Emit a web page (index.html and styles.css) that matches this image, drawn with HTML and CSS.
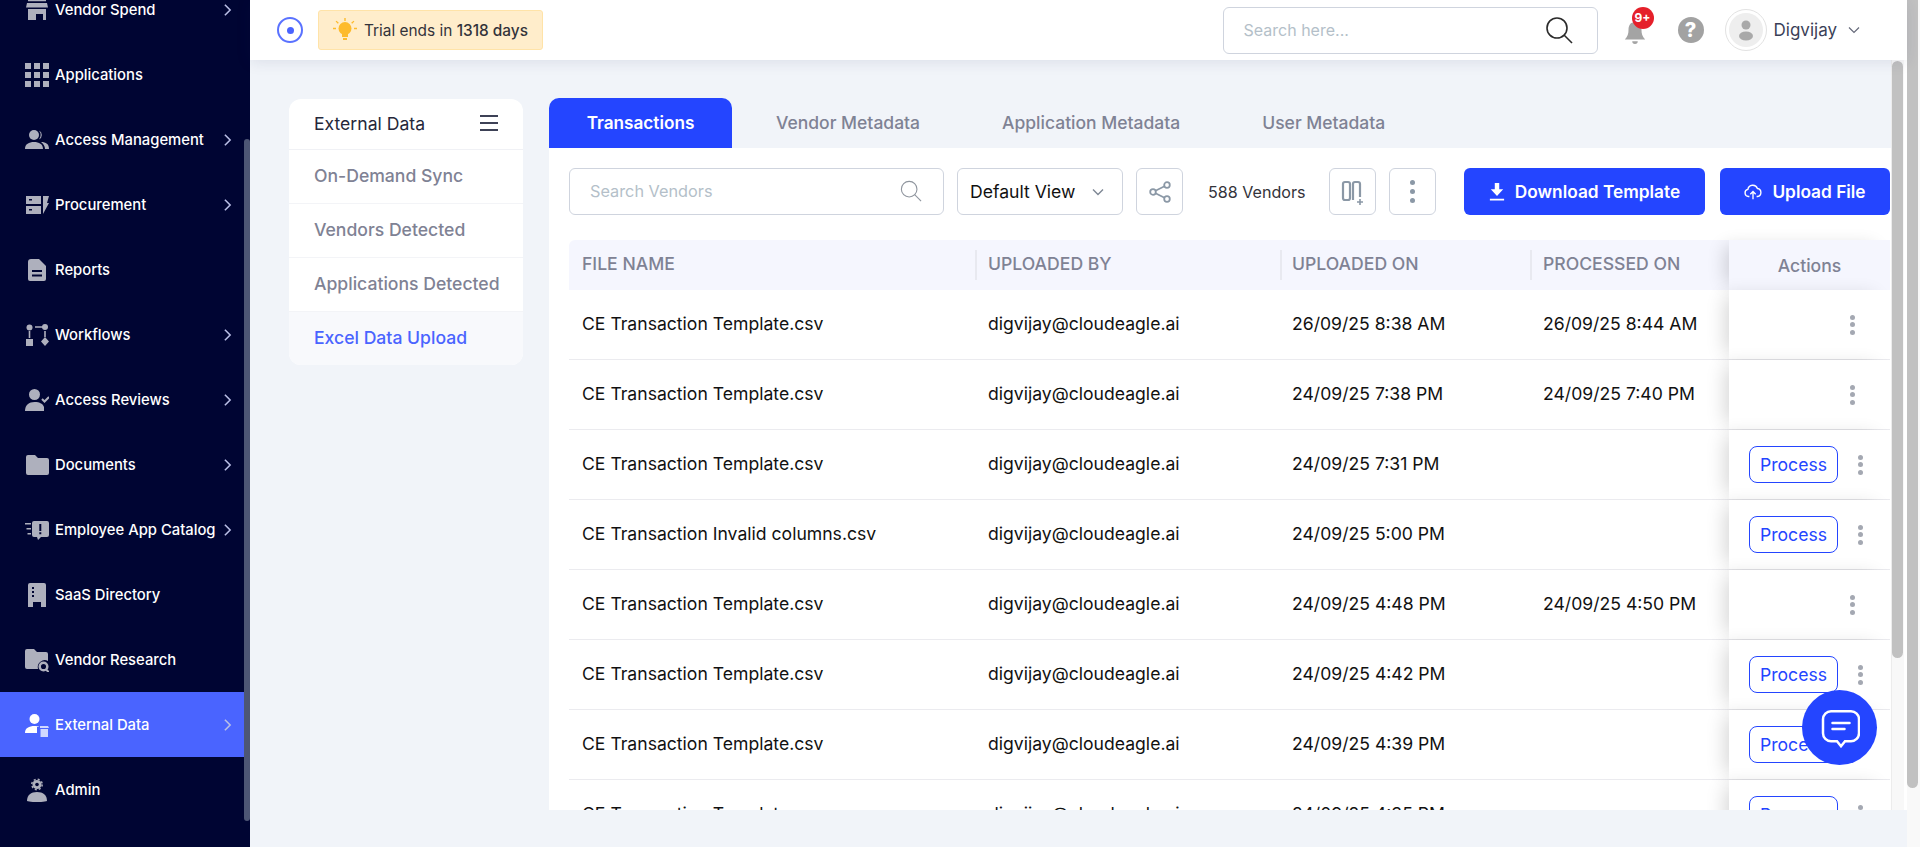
FILE: index.html
```html
<!DOCTYPE html>
<html lang="en">
<head>
    <meta charset="utf-8" />
    <title>External Data</title>
    <link rel="stylesheet" href="styles.css">
</head>
<body>
    <aside class="sidebar">
        <nav class="side-nav">
            <a class="side-item">
                <svg class="side-icon" viewBox="0 0 24 24"><path d="M3 1h18v2.2H3zM2 5h20l1 4.5H1zM3 11h18v11h-3v-6H11v6H3zM5.5 15h3.5v3.500H5.500z" /></svg>
                <span class="side-label">Vendor Spend</span><span class="side-arrow"><svg viewBox="0 0 10 16"><path d="M2 2l6 6-6 6" /></svg></span>
            </a>
            <a class="side-item">
                <svg class="side-icon" viewBox="0 0 24 24"><path d="M0 0h6v6H0zM9 0h6v6H9zM18 0h6v6h-6zM0 9h6v6H0zM9 9h6v6H9zM18 9h6v6h-6zM0 18h6v6H0zM9 18h6v6H9zM18 18h6v6h-6z" /></svg>
                <span class="side-label">Applications</span>
            </a>
            <a class="side-item">
                <svg class="side-icon" viewBox="0 0 24 24"><circle cx="9" cy="7" r="5" /><path d="M0 21c0-5 4-7 9-7s9 2 9 7zM14 2.500a5 5 0 0 1 0 9 7 7 0 0 0 0-9zM16 14c5 0 8 2 8 7h-4c0-3-1.500-5-4-7z" /></svg>
                <span class="side-label">Access Management</span><span class="side-arrow"><svg viewBox="0 0 10 16"><path d="M2 2l6 6-6 6" /></svg></span>
            </a>
            <a class="side-item">
                <svg class="side-icon" viewBox="0 0 24 24"><path d="M1 3h15v8H1zM1 13h15v8H1zM18 3h6l-2 7h2l-6 11z" /><path class="cut" d="M4 6h3v1.500H4zM4 16h3v1.500H4z" /></svg>
                <span class="side-label">Procurement</span><span class="side-arrow"><svg viewBox="0 0 10 16"><path d="M2 2l6 6-6 6" /></svg></span>
            </a>
            <a class="side-item">
                <svg class="side-icon" viewBox="0 0 24 24"><path d="M6 1h8l7 7v13a2 2 0 0 1-2 2H5a2 2 0 0 1-2-2V4a3 3 0 0 1 3-3z" /><path class="cut" d="M7 12h10v2H7zM7 16.500h10v2H7z" /></svg>
                <span class="side-label">Reports</span>
            </a>
            <a class="side-item">
                <svg class="side-icon" viewBox="0 0 24 24"><circle cx="4.500" cy="4.500" r="3" /><circle cx="20" cy="4" r="3" /><path d="M3.700 8h1.600v7H3.700zM10 3.200h8v1.600h-8zM1 16h7v7H1zM19.200 8h1.600v6h-1.600zM20 14l4 4.500-4 4.500-4-4.500z" /></svg>
                <span class="side-label">Workflows</span><span class="side-arrow"><svg viewBox="0 0 10 16"><path d="M2 2l6 6-6 6" /></svg></span>
            </a>
            <a class="side-item">
                <svg class="side-icon" viewBox="0 0 24 24"><circle cx="9.500" cy="6.500" r="5.500" /><path d="M0 23c0-6 4-9 9.500-9s8.500 2 9.500 5v4z" /><path class="tick" d="M17 11l2.500 2.500L24 9" /></svg>
                <span class="side-label">Access Reviews</span><span class="side-arrow"><svg viewBox="0 0 10 16"><path d="M2 2l6 6-6 6" /></svg></span>
            </a>
            <a class="side-item">
                <svg class="side-icon" viewBox="0 0 24 24"><path d="M3 2h7l3 3h9a2 2 0 0 1 2 2v13a2 2 0 0 1-2 2H3a2 2 0 0 1-2-2V4a2 2 0 0 1 2-2z" /></svg>
                <span class="side-label">Documents</span><span class="side-arrow"><svg viewBox="0 0 10 16"><path d="M2 2l6 6-6 6" /></svg></span>
            </a>
            <a class="side-item">
                <svg class="side-icon" viewBox="0 0 24 24"><path d="M0 5h6v1.500H0zM1.500 10h4.500v1.500H1.500zM2.500 15h3.500v1.500H2.500zM9 3h13a2 2 0 0 1 2 2v12a2 2 0 0 1-2 2h-6l-3 3-1-3H9a2 2 0 0 1-2-2V5a2 2 0 0 1 2-2z" /><path class="cut" d="M14.300 6h2v7h-2zM14.300 14.200h2v2h-2z" /></svg>
                <span class="side-label">Employee App Catalog</span><span class="side-arrow"><svg viewBox="0 0 10 16"><path d="M2 2l6 6-6 6" /></svg></span>
            </a>
            <a class="side-item">
                <svg class="side-icon" viewBox="0 0 24 24"><path d="M5 0h14a2 2 0 0 1 2 2v22h-5v-5H8v5H3V2a2 2 0 0 1 2-2z" /><path class="cut" d="M7 4h2v2H7zM7 8h2v2H7zM7 12h2v2H7zM10 21h4v3h-4z" /></svg>
                <span class="side-label">SaaS Directory</span>
            </a>
            <a class="side-item">
                <svg class="side-icon" viewBox="0 0 24 24"><path d="M2 1h7l3 3h9a2 2 0 0 1 2 2v7a7 7 0 0 0-10 8H2a2 2 0 0 1-2-2V3a2 2 0 0 1 2-2z" /><circle class="ring" cx="18.500" cy="18.500" r="3.800" /><path class="tick" d="M21 21.500l3 3" /></svg>
                <span class="side-label">Vendor Research</span>
            </a>
            <a class="side-item active">
                <svg class="side-icon" viewBox="0 0 24 24"><circle cx="9.500" cy="6" r="5" /><path d="M0 20c0-5 4-7 9.500-7 2 0 3.500.3 5 1H12v6z" /><path d="M15 13h8l1 2h-9zM15.500 16H23v8h-7.500z" opacity=".75" /></svg>
                <span class="side-label">External Data</span><span class="side-arrow"><svg viewBox="0 0 10 16"><path d="M2 2l6 6-6 6" /></svg></span>
            </a>
            <a class="side-item">
                <svg class="side-icon" viewBox="0 0 24 24"><circle cx="12" cy="6.500" r="4.500" /><circle class="teeth" cx="12" cy="6.500" r="5.200" /><path d="M2 23c0-6 4-9 10-9s10 3 10 9c-3 1.500-17 1.500-20 0z" /><circle class="cut" cx="12" cy="6.500" r="1.800" /></svg>
                <span class="side-label">Admin</span>
            </a>
        </nav>
        <div class="side-scroll"><div class="side-thumb"></div></div>
    </aside>

    <div class="page">
        <header class="topbar">
            <span class="target"><span class="target-dot"></span></span>
            <div class="trial">
                <svg class="bulb" viewBox="0 0 26 26"><circle cx="13" cy="11.500" r="6.500" /><path d="M10 17h6v3h-6zM11 21h4v2h-4zM12.300 1h1.400v3h-1.400zM1 10.800h3v1.400H1zM22 10.800h3v1.400h-3zM4.500 3.700l2.300 2-1 1-2.200-2.100zM21.500 3.700l-2.300 2 1 1 2.200-2.100z" /></svg>
                <span>Trial ends in <b>1318 days</b></span>
            </div>
            <div class="top-search">
                <span class="top-search-text">Search here...</span>
                <svg class="top-search-icon" viewBox="0 0 28 28"><circle cx="12" cy="12" r="10" /><path d="M19 19l8 8" /></svg>
            </div>
            <div class="bell">
                <svg viewBox="0 0 24 26"><path d="M12 1c5 0 7 4 7 8 0 5 1 8 4 11H1c3-3 4-6 4-11 0-4 2-8 7-8zM9 22h6a3 3 0 0 1-6 0z" /></svg>
                <span class="badge">9+</span>
            </div>
            <span class="help">?</span>
            <span class="avatar">
                <svg viewBox="0 0 34 34"><circle cx="17" cy="17" r="17" fill="#eeeeee" /><circle cx="17" cy="12" r="4.500" fill="#a9a9a9" /><ellipse cx="17" cy="23" rx="7" ry="4.500" fill="#a9a9a9" /></svg>
            </span>
            <span class="user-name">Digvijay</span>
            <svg class="user-caret" viewBox="0 0 12 8"><path d="M1 1.500l5 5 5-5" /></svg>
        </header>

        <div class="content">
            <div class="sub-nav">
                <div class="sub-head">
                    <span>External Data</span>
                    <span class="burger"><i></i><i></i><i></i></span>
                </div>
                <a class="sub-item">On-Demand Sync</a>
                <a class="sub-item">Vendors Detected</a>
                <a class="sub-item">Applications Detected</a>
                <a class="sub-item current">Excel Data Upload</a>
            </div>

            <section class="panel">
                <div class="tabs">
                    <a class="tab on">Transactions</a>
                    <a class="tab">Vendor Metadata</a>
                    <a class="tab">Application Metadata</a>
                    <a class="tab">User Metadata</a>
                </div>
                <div class="card">
                    <div class="toolbar">
                        <div class="vendor-search">
                            <span>Search Vendors</span>
                            <svg viewBox="0 0 24 24"><circle cx="10" cy="10" r="8.500" /><path d="M16 16l7 7" /></svg>
                        </div>
                        <div class="view-select">
                            <span>Default View</span>
                            <svg viewBox="0 0 12 8"><path d="M1 1.500l5 5 5-5" /></svg>
                        </div>
                        <span class="tool-btn share">
                            <svg viewBox="0 0 24 24"><circle cx="19" cy="5" r="2.800" /><circle cx="5" cy="12" r="2.800" /><circle cx="19" cy="19" r="2.800" /><path d="M16.500 6.300L7.500 10.700M7.500 13.300l9 4.400" /></svg>
                        </span>
                        <span class="count">588 Vendors</span>
                        <span class="tool-btn cols">
                            <svg viewBox="0 0 26 26"><rect x="3" y="3" width="7" height="18" rx="2" /><path d="M13 21V5a2 2 0 0 1 2-2h3a2 2 0 0 1 2 2v13" /><path class="thin" d="M20 20v6M17 23h6" /></svg>
                        </span>
                        <span class="tool-btn dots"><i></i><i></i><i></i></span>
                        <a class="primary-btn download">
                            <svg viewBox="0 0 18 20"><path d="M6.500 0h5v7H16l-7 7.500L2 7h4.500zM1 17.500h16V19.500H1z" /></svg>
                            Download Template
                        </a>
                        <a class="primary-btn upload">
                            <svg class="line" viewBox="0 0 20 18"><path d="M6 14H5a4 4 0 0 1-.7-7.900 5.500 5.500 0 0 1 10.600-1A4.500 4.500 0 0 1 15 14h-1M10 17V9M7 11.500L10 8.500l3 3" /></svg>
                            Upload File
                        </a>
                    </div>

                    <div class="table-wrap">
                        <div class="table-row table-head">
                            <div class="cell col-name">FILE NAME</div>
                            <div class="cell col-by">UPLOADED BY</div>
                            <div class="cell col-on">UPLOADED ON</div>
                            <div class="cell col-proc">PROCESSED ON</div>
                            <div class="cell col-act">Actions</div>
                        </div>
                        <div class="table-row">
                            <div class="cell col-name">CE Transaction Template.csv</div>
                            <div class="cell col-by">digvijay@cloudeagle.ai</div>
                            <div class="cell col-on">26/09/25 8:38 AM</div>
                            <div class="cell col-proc">26/09/25 8:44 AM</div>
                            <div class="cell col-act"><span class="kebab"><i></i><i></i><i></i></span></div>
                        </div>
                        <div class="table-row">
                            <div class="cell col-name">CE Transaction Template.csv</div>
                            <div class="cell col-by">digvijay@cloudeagle.ai</div>
                            <div class="cell col-on">24/09/25 7:38 PM</div>
                            <div class="cell col-proc">24/09/25 7:40 PM</div>
                            <div class="cell col-act"><span class="kebab"><i></i><i></i><i></i></span></div>
                        </div>
                        <div class="table-row">
                            <div class="cell col-name">CE Transaction Template.csv</div>
                            <div class="cell col-by">digvijay@cloudeagle.ai</div>
                            <div class="cell col-on">24/09/25 7:31 PM</div>
                            <div class="cell col-proc"></div>
                            <div class="cell col-act has-btn"><a class="process">Process</a><span class="kebab"><i></i><i></i><i></i></span></div>
                        </div>
                        <div class="table-row">
                            <div class="cell col-name">CE Transaction Invalid columns.csv</div>
                            <div class="cell col-by">digvijay@cloudeagle.ai</div>
                            <div class="cell col-on">24/09/25 5:00 PM</div>
                            <div class="cell col-proc"></div>
                            <div class="cell col-act has-btn"><a class="process">Process</a><span class="kebab"><i></i><i></i><i></i></span></div>
                        </div>
                        <div class="table-row">
                            <div class="cell col-name">CE Transaction Template.csv</div>
                            <div class="cell col-by">digvijay@cloudeagle.ai</div>
                            <div class="cell col-on">24/09/25 4:48 PM</div>
                            <div class="cell col-proc">24/09/25 4:50 PM</div>
                            <div class="cell col-act"><span class="kebab"><i></i><i></i><i></i></span></div>
                        </div>
                        <div class="table-row">
                            <div class="cell col-name">CE Transaction Template.csv</div>
                            <div class="cell col-by">digvijay@cloudeagle.ai</div>
                            <div class="cell col-on">24/09/25 4:42 PM</div>
                            <div class="cell col-proc"></div>
                            <div class="cell col-act has-btn"><a class="process">Process</a><span class="kebab"><i></i><i></i><i></i></span></div>
                        </div>
                        <div class="table-row">
                            <div class="cell col-name">CE Transaction Template.csv</div>
                            <div class="cell col-by">digvijay@cloudeagle.ai</div>
                            <div class="cell col-on">24/09/25 4:39 PM</div>
                            <div class="cell col-proc"></div>
                            <div class="cell col-act has-btn"><a class="process">Process</a><span class="kebab"><i></i><i></i><i></i></span></div>
                        </div>
                        <div class="table-row">
                            <div class="cell col-name">CE Transaction Template.csv</div>
                            <div class="cell col-by">digvijay@cloudeagle.ai</div>
                            <div class="cell col-on">24/09/25 4:35 PM</div>
                            <div class="cell col-proc"></div>
                            <div class="cell col-act has-btn"><a class="process">Process</a><span class="kebab"><i></i><i></i><i></i></span></div>
                        </div>
                    </div>
                </div>
            </section>
            <div class="inner-scroll"><div class="inner-thumb"></div></div>
        </div>
    </div>

    <div class="outer-scroll"><div class="outer-thumb"></div></div>

    <a class="chat">
        <svg viewBox="0 0 40 40"><path d="M11 3.200h20a8 8 0 0 1 8 8v14a8 8 0 0 1-8 8h-6l-4 5-4-5h-6a8 8 0 0 1-8-8v-14a8 8 0 0 1 8-8z" /><path d="M12.500 15h17M12.500 21h12" /></svg>
    </a>
</body>
</html>
```

FILE: styles.css
```css
* {
    margin: 0;
    padding: 0;
    box-sizing: border-box;
}

html, body {
    height: 100%;
    overflow: hidden;
}

body {
    display: flex;
    font-family: Inter, "Liberation Sans", sans-serif;
    font-size: 14px;
    color: #111111;
    background: #f1f4f9;
}

a {
    text-decoration: none;
    color: inherit;
}

/* sidebar */
.sidebar {
    flex: 0 0 250px;
    display: flex;
    background: #000533;
    overflow: hidden;
}

.side-nav {
    flex: 1;
    min-width: 0;
    margin-top: -23px;
}

.side-item {
    display: flex;
    align-items: center;
    height: 65px;
    padding: 0 3px 0 25px;
    color: #ffffff;
    font-size: 14.800px;
    font-weight: 500;
}

.side-item.active {
    background: #4a64ff;
}

.side-icon {
    flex: 0 0 24px;
    width: 24px;
    height: 24px;
    margin-right: 6px;
    fill: #aeb0bd;
}

.side-item.active .side-icon {
    fill: #ffffff;
}

.side-icon .cut {
    fill: #000533;
}

.side-icon .tick, .side-icon .ring {
    fill: none;
    stroke: #aeb0bd;
    stroke-width: 2;
}

.side-icon .ring {
    stroke-width: 2.500;
}

.side-icon .teeth {
    fill: none;
    stroke: #aeb0bd;
    stroke-width: 1.500;
    stroke-dasharray: 2 2.100;
}

.side-label {
    flex: 1 1 0;
    min-width: 0;
    white-space: nowrap;
}

.side-arrow {
    display: flex;
    flex: 0 0 28px;
    justify-content: center;
}

.side-arrow svg {
    width: 9px;
    height: 14px;
    fill: none;
    stroke: #b9bfe6;
    stroke-width: 1.800;
}

.side-scroll {
    flex: 0 0 6px;
}

.side-thumb {
    height: 682px;
    margin-top: 139px;
    background: #4d5675;
    border-radius: 3px;
}

/* top bar */
.page {
    flex: 1;
    min-width: 0;
    display: flex;
    flex-direction: column;
}

.topbar {
    flex: 0 0 60px;
    display: flex;
    align-items: center;
    padding: 0 0 0 27px;
    background: #ffffff;
    box-shadow: 0 2px 14px rgba(30, 40, 90, .1);
    position: relative;
}

.target {
    display: flex;
    align-items: center;
    justify-content: center;
    width: 26px;
    height: 26px;
    border: 2px solid #5a72ff;
    border-radius: 50%;
}

.target-dot {
    width: 7px;
    height: 7px;
    border-radius: 50%;
    background: #4a64ff;
}

.trial {
    display: flex;
    align-items: center;
    width: 225px;
    height: 40px;
    margin-left: 15px;
    padding-left: 13px;
    font-size: 15.400px;
    color: #33333a;
    background: #ffedcb;
    border: 1px solid #ffe3a8;
    border-radius: 3px;
    white-space: nowrap;
}

.trial b {
    font-weight: 500;
}

.bulb {
    width: 26px;
    height: 26px;
    margin-right: 6px;
    fill: #fdbb2d;
}

.top-search {
    display: flex;
    align-items: center;
    justify-content: space-between;
    width: 375px;
    height: 47px;
    margin-left: auto;
    padding: 0 24px 0 20px;
    border: 1px solid #cfd4de;
    border-radius: 6px;
}

.top-search-text {
    color: #b4bfc9;
    font-size: 16px;
}

.top-search-icon {
    width: 28px;
    height: 28px;
    fill: none;
    stroke: #2b2b2b;
    stroke-width: 1.600;
}

.bell {
    position: relative;
    width: 26px;
    height: 24px;
    margin: 6px 0 0 25px;
}

.bell svg {
    display: block;
    width: 24px;
    height: 24px;
    fill: #a4a4a4;
}

.badge {
    position: absolute;
    top: -14px;
    left: 9px;
    width: 22px;
    height: 22px;
    border-radius: 50%;
    background: #e5202a;
    color: #ffffff;
    font-size: 12px;
    font-weight: 700;
    line-height: 22px;
    text-align: center;
}

.help {
    width: 26px;
    height: 26px;
    margin-left: 29px;
    border-radius: 50%;
    background: #a2a2a2;
    color: #ffffff;
    font-size: 20px;
    font-weight: 800;
    line-height: 26px;
    text-align: center;
}

.avatar {
    display: flex;
    align-items: center;
    justify-content: center;
    width: 42px;
    height: 42px;
    margin-left: 21px;
    border: 1px solid #e2e2e2;
    border-radius: 50%;
}

.avatar svg {
    width: 34px;
    height: 34px;
}

.user-name {
    margin-left: 7px;
    font-size: 17px;
    color: #3b3f58;
}

.user-caret {
    width: 12px;
    height: 8px;
    margin: 0 47px 0 11px;
    fill: none;
    stroke: #666a7a;
    stroke-width: 1.200;
}

/* content */
.content {
    flex: 1;
    min-height: 0;
    display: flex;
    align-items: flex-start;
    padding: 38px 0 0 39px;
}

.sub-nav {
    flex: 0 0 234px;
    margin-top: 1px;
    background: #ffffff;
    border-radius: 12px;
    overflow: hidden;
}

.sub-head {
    display: flex;
    align-items: center;
    justify-content: space-between;
    height: 51px;
    padding: 0 25px 2px;
    font-size: 17.600px;
    color: #25273a;
    border-bottom: 1px solid #f0f1f5;
}

.burger {
    display: flex;
    flex-direction: column;
    gap: 5px;
}

.burger i {
    display: block;
    width: 18px;
    height: 2px;
    background: #3d4156;
}

.sub-item {
    display: flex;
    align-items: center;
    height: 54px;
    padding: 0 25px 2px;
    font-size: 17.600px;
    font-weight: 500;
    color: #7f8294;
    border-bottom: 1px solid #f3f4f7;
    white-space: nowrap;
}

.sub-item.current {
    height: 53px;
    color: #4a64ff;
    background: #f8f9fc;
    border-bottom: 0;
}

.panel {
    flex: 1;
    min-width: 0;
    height: 712px;
    margin-left: 26px;
}

.tabs {
    display: flex;
    height: 50px;
}

.tab {
    display: flex;
    align-items: center;
    margin-left: 82px;
    padding-bottom: 2px;
    font-size: 17.500px;
    font-weight: 500;
    color: #7f8294;
    white-space: nowrap;
}

.tab.on {
    justify-content: center;
    width: 183px;
    margin-left: 0;
    color: #ffffff;
    background: #2445ff;
    border-radius: 10px 10px 0 0;
    font-size: 17.200px;
    font-weight: 600;
}

.tab.on + .tab {
    margin-left: 44px;
}

.card {
    height: 662px;
    padding-top: 20px;
    background: #ffffff;
    overflow: hidden;
}

.toolbar {
    display: flex;
    align-items: center;
    padding-left: 20px;
}

.vendor-search {
    display: flex;
    flex: 0 0 375px;
    align-items: center;
    justify-content: space-between;
    height: 47px;
    padding: 0 21px 1px 20px;
    border: 1px solid #cfd4de;
    border-radius: 6px;
    color: #b4bfc9;
    font-size: 16.300px;
}

.vendor-search svg {
    width: 22px;
    height: 22px;
    fill: none;
    stroke: #8f959e;
    stroke-width: 1.200;
}

.view-select {
    display: flex;
    flex: 0 0 166px;
    align-items: center;
    justify-content: space-between;
    height: 47px;
    margin-left: 13px;
    padding: 0 18px 0 12px;
    border: 1px solid #cfd4de;
    border-radius: 6px;
    font-size: 17.600px;
    color: #111111;
    white-space: nowrap;
}

.view-select svg {
    width: 12px;
    height: 8px;
    fill: none;
    stroke: #7e8795;
    stroke-width: 1.400;
}

.tool-btn {
    display: flex;
    flex: 0 0 47px;
    align-items: center;
    justify-content: center;
    height: 47px;
    border: 1px solid #cfd4de;
    border-radius: 6px;
}

.share {
    margin-left: 13px;
}

.tool-btn svg {
    width: 24px;
    height: 24px;
    fill: none;
    stroke: #8b98a6;
    stroke-width: 1.800;
}

.cols svg {
    width: 26px;
    height: 26px;
    stroke-width: 2.200;
}

.cols .thin {
    stroke-width: 1.600;
}

.count {
    flex: 0 0 98px;
    margin-left: 25px;
    font-size: 16.100px;
    color: #33333a;
    white-space: nowrap;
}

.cols {
    margin-left: 23px;
}

.dots {
    flex-direction: column;
    gap: 4px;
    margin-left: 13px;
}

.dots i, .kebab i {
    display: block;
    width: 5px;
    height: 5px;
    border-radius: 50%;
    background: #8b98a6;
}

.primary-btn {
    display: flex;
    align-items: center;
    justify-content: center;
    height: 47px;
    background: #2445ff;
    color: #ffffff;
    border-radius: 6px;
    font-size: 17.300px;
    font-weight: 600;
    white-space: nowrap;
}

.primary-btn svg {
    width: 16px;
    height: 18px;
    margin-right: 10px;
    fill: #ffffff;
}

.primary-btn svg.line {
    width: 18px;
    fill: none;
    stroke: #ffffff;
    stroke-width: 1.500;
}

.download {
    flex: 0 0 241px;
    margin-left: 28px;
}

.upload {
    flex: 0 0 170px;
    margin-left: 15px;
}

/* table */
.table-wrap {
    margin: 25px 1px 0 20px;
}

.table-row {
    display: flex;
    height: 70px;
    border-bottom: 1px solid #ebebef;
    font-size: 17.600px;
}

.table-head {
    height: 50px;
    border-bottom: 0;
    background: #f5f6fe;
    color: #7f8294;
    font-weight: 500;
    border-radius: 6px 6px 0 0;
}

.cell {
    display: flex;
    align-items: center;
    position: relative;
    padding-bottom: 2px;
    white-space: nowrap;
}

.table-head .cell {
    padding-bottom: 4px;
}

.col-name {
    flex: 0 0 406px;
    padding-left: 13px;
}

.col-by {
    flex: 0 0 305px;
    padding-left: 13px;
}

.col-on {
    flex: 0 0 250px;
    padding-left: 12px;
}

.col-proc {
    flex: 0 0 199px;
    padding-left: 13px;
}

.table-head .col-by::before, .table-head .col-on::before, .table-head .col-proc::before {
    content: "";
    position: absolute;
    left: 0;
    top: 10px;
    bottom: 10px;
    width: 2px;
    background: #e8e9f0;
}

.col-act {
    flex: 1;
    justify-content: flex-end;
    padding: 0 35px 0 0;
    background: #ffffff;
    box-shadow: -10px 0 18px -6px rgba(0, 0, 0, .16);
}

.table-head .col-act {
    justify-content: center;
    padding: 0;
    background: #f5f6fe;
    color: #7f8294;
}

.col-act.has-btn {
    justify-content: flex-start;
    padding: 0 0 0 20px;
}

.kebab {
    display: flex;
    flex-direction: column;
    gap: 2.500px;
}

.kebab i {
    background: #a4a8b2;
}

.process {
    display: flex;
    align-items: center;
    justify-content: center;
    width: 89px;
    height: 37px;
    margin-right: 20px;
    border: 1px solid #2445ff;
    border-radius: 8px;
    color: #2445ff;
    font-size: 17.600px;
    font-weight: 400;
}

/* scrollbars and chat */
.inner-scroll {
    flex: 0 0 16px;
    height: 750px;
    margin-top: -38px;
    padding-top: 1px;
    background: #f8f8f8;
    border-right: 3px solid #ffffff;
    border-left: 1px solid #ececec;
}

.inner-thumb {
    width: 11px;
    height: 597px;
    background: #c1c1c1;
    border-radius: 6px;
}

.outer-scroll {
    flex: 0 0 13px;
    padding-right: 2px;
    background: #f9f9f9;
}

.outer-thumb {
    height: 788px;
    background: #c1c1c1;
    border-radius: 0 0 6px 6px;
}

.chat {
    position: absolute;
    left: 1802px;
    top: 690px;
    display: flex;
    align-items: center;
    justify-content: center;
    width: 75px;
    height: 75px;
    border-radius: 50%;
    background: #2445ff;
}

.chat svg {
    width: 40px;
    height: 40px;
    fill: none;
    stroke: #ffffff;
    stroke-width: 2.500;
    stroke-linecap: round;
}
```
